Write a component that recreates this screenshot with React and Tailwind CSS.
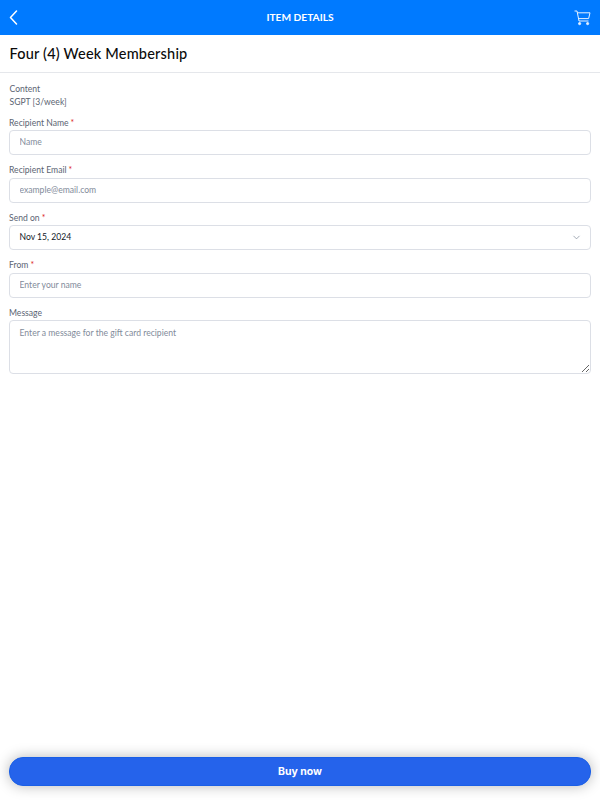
import React from "react";
import { ChevronDown } from "lucide-react";

function Label({ children, required }) {
  return (
    <label className="block h-[13px] text-[8.6px] leading-[14px] text-[#5b6472]">
      {children}
      {required && <span className="ml-[2px] text-[#dc2626]">*</span>}
    </label>
  );
}

function Field({ label, required, placeholder }) {
  return (
    <div className="flex flex-col gap-[1.5px]">
      <Label required={required}>{label}</Label>
      <input
        placeholder={placeholder}
        className="h-[25px] w-full rounded-[4px] border border-[#dcdfe6] bg-white px-[9.5px] pb-[1px] text-[8.6px] text-[#111827] outline-none placeholder:text-[#828b9a]"
      />
    </div>
  );
}

export default function App() {
  return (
    <div className="flex h-[800px] w-[600px] flex-col bg-white font-['Lato',sans-serif]">
      <header className="flex h-[35px] shrink-0 items-center bg-[#007aff] px-[9px] text-white">
        <div className="flex flex-1 justify-start">
          <svg width="9" height="15" viewBox="0 0 9 15" fill="none" stroke="#ffffff" strokeWidth="1.5" strokeLinecap="round" strokeLinejoin="round">
            <path d="M7.5 1 L1.5 7.5 L7.5 14" />
          </svg>
        </div>
        <h1 className="text-[10.2px] font-bold">ITEM DETAILS</h1>
        <div className="flex flex-1 justify-end">
          <svg width="17" height="16" viewBox="0 0 17 16" fill="none" stroke="#ffffff" strokeWidth="1" opacity="0.9">
            <path d="M0.5 1 H3 L5 11 H14.5" />
            <path d="M3.4 2.8 H16 L14.6 8.6 H4.6" />
            <circle cx="5.6" cy="13.6" r="1.1" fill="#ffffff" />
            <circle cx="13.6" cy="13.6" r="1.1" fill="#ffffff" />
          </svg>
        </div>
      </header>

      <div className="flex h-[38px] shrink-0 items-center border-b border-[#e5e7eb] px-[9.5px]">
        <h2 className="text-[14.5px] font-medium tracking-[0.2px] text-[#0b0b0b]">Four (4) Week Membership</h2>
      </div>

      <main className="flex flex-1 flex-col gap-[8px] px-[9px] pt-[8.5px]">
        <div className="pl-[0.5px] text-[8.6px] text-[#5b6472]">
          <div className="h-[13px] leading-[14px]">Content</div>
          <div className="h-[13px] leading-[14px]">SGPT [3/week]</div>
        </div>
        <Field label="Recipient Name" required placeholder="Name" />
        <Field label="Recipient Email" required placeholder="example@email.com" />
        <div className="flex flex-col gap-[1.5px]">
          <Label required>Send on</Label>
          <div className="flex h-[25px] items-center justify-between rounded-[4px] border border-[#dcdfe6] bg-white pl-[9.5px] pr-[8px] text-[8.6px] text-[#111827]">
            <span>Nov 15, 2024</span>
            <ChevronDown size={11} strokeWidth={1.5} className="text-[#7b8494]" />
          </div>
        </div>
        <Field label="From" required placeholder="Enter your name" />
        <div className="flex flex-col gap-[1.5px]">
          <Label>Message</Label>
          <textarea
            placeholder="Enter a message for the gift card recipient"
            className="h-[54px] w-full rounded-[4px] border border-[#dcdfe6] bg-white px-[9.5px] py-[6px] text-[8.6px] text-[#111827] outline-none placeholder:text-[#828b9a]"
          />
        </div>
      </main>

      <div className="shrink-0 px-[9px] pb-[14px]">
        <button className="h-[29px] w-full rounded-[14px] border border-[#1a5fe6] bg-[#2563eb] font-['Inter',sans-serif] text-[10.5px] font-bold text-white shadow-[0_0_14px_rgba(0,0,0,0.28)]">
          Buy now
        </button>
      </div>
    </div>
  );
}
